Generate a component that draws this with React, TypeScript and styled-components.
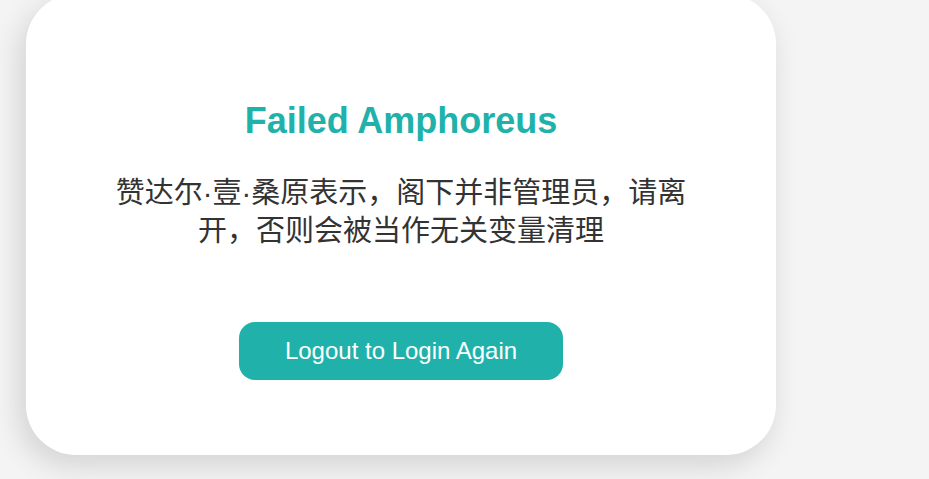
import React from "react";
import styled, { createGlobalStyle } from "styled-components";

const GlobalStyle = createGlobalStyle`
  html,
  body {
    margin: 0;
    padding: 0;
    background: #f4f4f4;
    font-family: "Liberation Sans", Arial, "Noto Sans CJK SC", sans-serif;
  }
`;

const App = () => {
  return (
    <>
      <GlobalStyle />
      <Page>
        <Card>
          <Title>Failed Amphoreus</Title>
          <Message>
            赞达尔·壹·桑原表示，阁下并非管理员，请离开，否则会被当作无关变量清理
          </Message>
          <LogoutButton type="button">Logout to Login Again</LogoutButton>
        </Card>
      </Page>
    </>
  );
};

export default App;

const Page = styled.div`
  display: flex;
  width: 100vw;
  height: 100vh;
  overflow: hidden;
  padding-left: 26px;
  box-sizing: border-box;
`;

const Card = styled.div`
  display: flex;
  flex-direction: column;
  align-items: center;
  width: 750px;
  height: 461px;
  margin-top: -6px;
  padding: 106px 80px 0;
  box-sizing: border-box;
  background: #ffffff;
  border-radius: 50px;
  box-shadow: -6px 10px 30px rgba(0, 0, 0, 0.14);
`;

const Title = styled.h1`
  margin: 0;
  color: #20b2aa;
  font-size: 36px;
  font-weight: 700;
  line-height: 41px;
`;

/* latin font first so the middle dots stay narrow */
const Message = styled.p`
  margin: 33px 0 0;
  color: #333333;
  font-family: "Liberation Sans", "Noto Sans CJK SC", sans-serif;
  font-size: 29px;
  line-height: 38px;
  text-align: center;
`;

const LogoutButton = styled.button`
  height: 58px;
  margin-top: 72px;
  padding: 0 46px;
  border: none;
  border-radius: 16px;
  background: #20b2aa;
  color: #ffffff;
  font-family: "Liberation Sans", Arial, sans-serif;
  font-size: 24px;
  cursor: pointer;
`;
